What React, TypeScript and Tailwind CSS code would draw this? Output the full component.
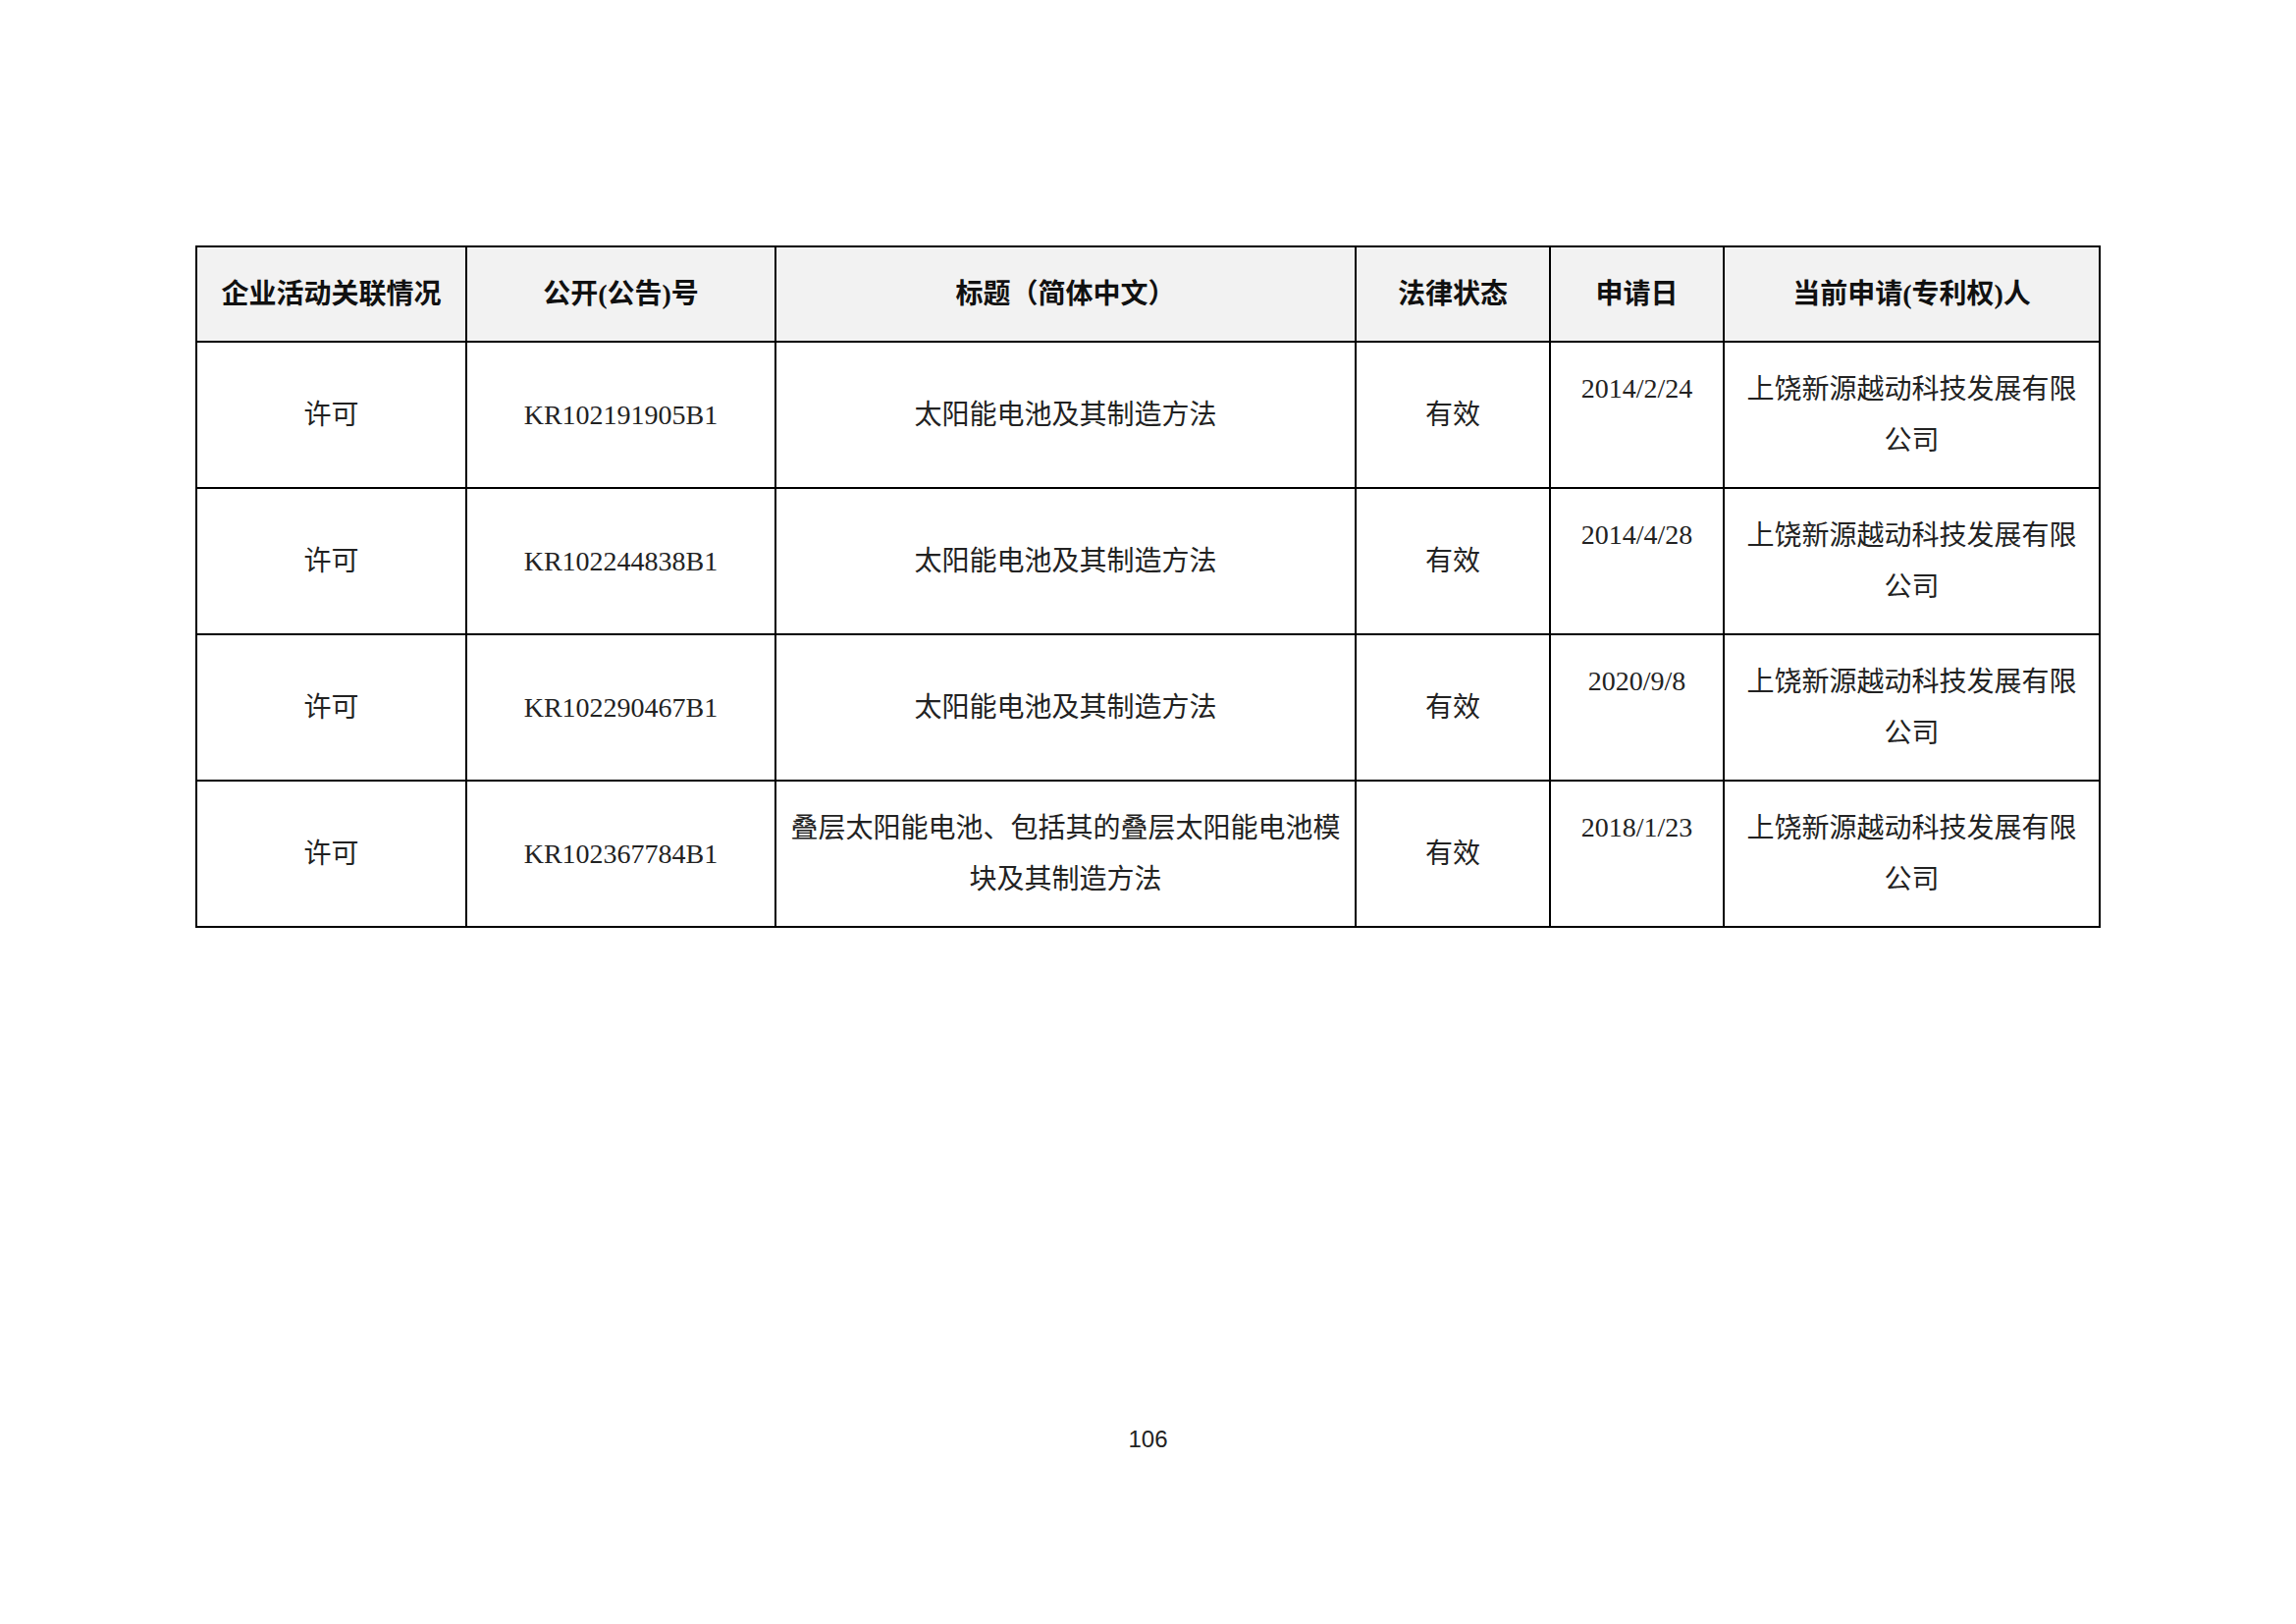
import React from 'react';

interface PatentRow {
  relation: string;
  number: string;
  title: string;
  status: string;
  date: string;
  owner: string;
}

const rows: PatentRow[] = [
  { relation: '许可', number: 'KR102191905B1', title: '太阳能电池及其制造方法', status: '有效', date: '2014/2/24', owner: '上饶新源越动科技发展有限公司' },
  { relation: '许可', number: 'KR102244838B1', title: '太阳能电池及其制造方法', status: '有效', date: '2014/4/28', owner: '上饶新源越动科技发展有限公司' },
  { relation: '许可', number: 'KR102290467B1', title: '太阳能电池及其制造方法', status: '有效', date: '2020/9/8', owner: '上饶新源越动科技发展有限公司' },
  {
    relation: '许可',
    number: 'KR102367784B1',
    title: '叠层太阳能电池、包括其的叠层太阳能电池模块及其制造方法',
    status: '有效',
    date: '2018/1/23',
    owner: '上饶新源越动科技发展有限公司',
  },
];

const headers = ['企业活动关联情况', '公开(公告)号', '标题（简体中文）', '法律状态', '申请日', '当前申请(专利权)人'];

const App: React.FC = () => {
  return (
    <div className="w-[2339px] h-[1654px] bg-white flex flex-col pt-[250px] font-['Liberation_Serif','Noto_Sans_CJK_SC',serif] text-black">
      <div className="pl-[199px]">
        <table className="table-fixed border-collapse w-[1941px] text-[28px]">
          <colgroup>
            <col className="w-[275px]" />
            <col className="w-[315px]" />
            <col className="w-[591px]" />
            <col className="w-[198px]" />
            <col className="w-[177px]" />
            <col className="w-[383px]" />
          </colgroup>
          <thead>
            <tr className="h-[97px] bg-[#f2f2f2]">
              {headers.map(h => (
                <th key={h} className="border-2 border-black font-bold text-center align-middle leading-[40px] text-[#111]">
                  {h}
                </th>
              ))}
            </tr>
          </thead>
          <tbody>
            {rows.map(r => (
              <tr key={r.number} className="h-[149px]">
                <td className="border-2 border-black text-center align-middle text-[#222]">{r.relation}</td>
                <td className="border-2 border-black text-center align-middle text-[#222]">{r.number}</td>
                <td className="border-2 border-black text-center align-middle leading-[52px] px-[6px] text-[#222]">{r.title}</td>
                <td className="border-2 border-black text-center align-middle text-[#222]">{r.status}</td>
                <td className="border-2 border-black text-center align-top pt-[21px] leading-[52px] text-[#222]">{r.date}</td>
                <td className="border-2 border-black text-center align-middle leading-[52px] px-[20px] text-[#222]">{r.owner}</td>
              </tr>
            ))}
          </tbody>
        </table>
      </div>
      <div className="mt-[505px] text-center text-[24px] leading-[32px] text-[#222] font-['Liberation_Sans',sans-serif]">106</div>
    </div>
  );
};

export default App;
